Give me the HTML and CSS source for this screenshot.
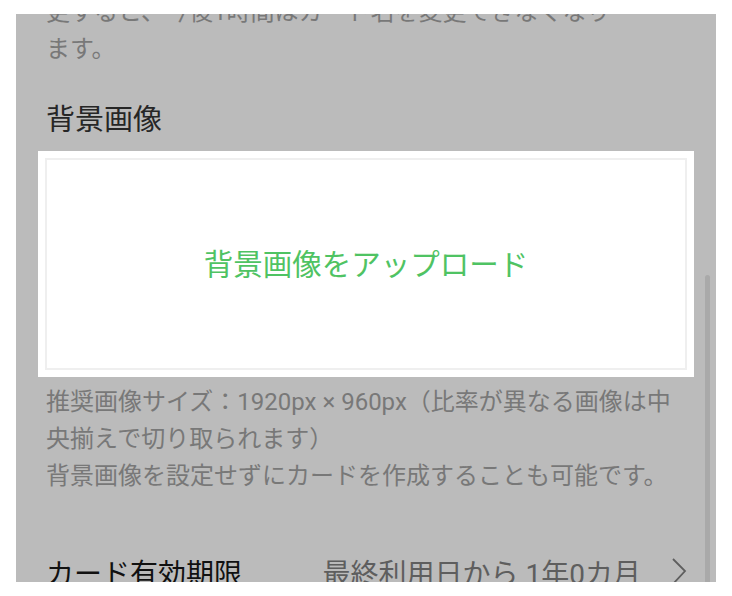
FILE: index.html
```html
<!DOCTYPE html>
<html lang="ja">
<head>
<meta charset="utf-8">
<title>背景画像</title>
<link rel="stylesheet" href="styles.css">
</head>
<body>
<div class="panel">
  <p class="note">更すると、今後1時間はカード名を変更できなくなり<br>ます。</p>
  <h2 class="heading">背景画像</h2>
  <div class="card">
    <div class="upload">背景画像をアップロード</div>
  </div>
  <p class="desc">推奨画像サイズ：1920px × 960px（比率が異なる画像は中<br>央揃えで切り取られます）<br>背景画像を設定せずにカードを作成することも可能です。</p>
  <div class="row">
    <span class="label">カード有効期限</span>
    <span class="value">最終利用日から 1年0カ月
      <svg class="chev" width="16" height="28" viewBox="0 0 16 28"><polyline points="2,1 14,13 2,26" fill="none" stroke="#5e5e5e" stroke-width="1.8"/></svg>
    </span>
  </div>
  <div class="thumb"></div>
</div>
</body>
</html>
```

FILE: styles.css
```css
* { box-sizing: border-box; }
html, body { margin: 0; padding: 0; background: #ffffff; }
body {
  padding: 14px 16px;
  font-family: Roboto, "Noto Sans CJK JP", sans-serif;
}
.panel {
  position: relative;
  height: 568px;
  background: #bbbbbb;
  overflow: hidden;
}
.note {
  margin: -20px 0 0 0;
  padding: 0 30px;
  font-size: 24px;
  line-height: 37px;
  color: #787878;
  white-space: nowrap;
}
.heading {
  margin: 32px 0 0 0;
  padding: 0 30px;
  font-size: 29px;
  font-weight: normal;
  line-height: 40px;
  color: #262626;
}
.card {
  margin: 11px 22px 0 22px;
  height: 226px;
  padding: 7px;
  background: #ffffff;
}
.upload {
  height: 100%;
  border: 2px solid #efefef;
  padding: 0 0 4px 0;
  display: flex;
  align-items: center;
  justify-content: center;
  font-size: 29.5px;
  color: #4fc363;
}
.desc {
  margin: 7px 0 0 0;
  padding: 0 30px;
  font-size: 24px;
  line-height: 37px;
  color: #787878;
  white-space: nowrap;
}
.row {
  margin-top: 57px;
  padding: 0 29px 0 30px;
  display: flex;
  justify-content: space-between;
  align-items: center;
  height: 40px;
  font-size: 28px;
}
.label { color: #111111; }
.value {
  color: #5e5e5e;
  display: flex;
  align-items: center;
  gap: 30px;
}
.chev { display: block; }
.thumb {
  position: absolute;
  right: 6px;
  top: 261px;
  bottom: 0;
  width: 5px;
  border-radius: 3px 3px 0 0;
  background: #a9a9a9;
}
```
